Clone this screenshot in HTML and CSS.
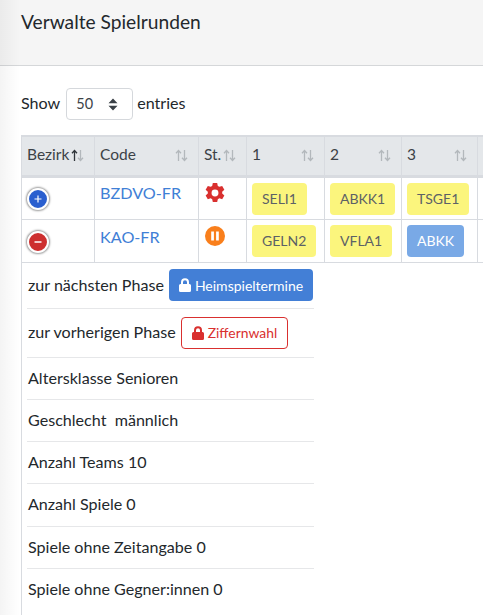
FILE: index.html
```html
<!DOCTYPE html>
<html lang="de">
<head>
<meta charset="utf-8">
<title>Verwalte Spielrunden</title>
<link rel="stylesheet" href="styles.css">
</head>
<body>
<div class="shade"></div>
<header class="head"><h1>Verwalte Spielrunden</h1></header>
<main class="content">
  <div class="length">
    <span class="label">Show</span>
    <span class="select"><span class="value">50</span>
      <svg class="updown" viewBox="0 0 10 13" width="10" height="13"><path d="M5 0.5 9.5 5.2H.5zM5 12.5.5 7.8h9z" fill="#3a4046"/></svg>
    </span>
    <span class="label">entries</span>
  </div>
  <div class="tablewrap">
    <svg class="defs" width="0" height="0"><defs><g id="s"><path d="M3.500 12V2M1 4.200 3.500 1.500 6 4.200M9.500 1v10M7 8.800l2.500 2.700L12 8.800" stroke="#b3b8bc" stroke-width="1.300" fill="none"/></g></defs></svg>
    <table class="grid">
      <colgroup><col class="c1"><col class="c2"><col class="c3"><col class="c4"><col class="c5"><col class="c6"><col class="c7"></colgroup>
      <thead>
        <tr>
          <th><span class="th">Bezirk<svg class="sort" viewBox="0 0 13 13" width="13" height="13"><path d="M3.500 12V2M1 4.200 3.500 1.500 6 4.200" stroke="#2f353a" stroke-width="1.300"/><path d="M9.500 1v10M7 8.800l2.500 2.700L12 8.800" stroke="#b3b8bc" stroke-width="1.300"/></svg></span></th>
          <th><span class="th">Code<svg class="sort" viewBox="0 0 13 13" width="13" height="13"><use href="#s"/></svg></span></th>
          <th><span class="th">St.<svg class="sort" viewBox="0 0 13 13" width="13" height="13"><use href="#s"/></svg></span></th>
          <th><span class="th">1<svg class="sort" viewBox="0 0 13 13" width="13" height="13"><use href="#s"/></svg></span></th>
          <th><span class="th">2<svg class="sort" viewBox="0 0 13 13" width="13" height="13"><use href="#s"/></svg></span></th>
          <th><span class="th">3<svg class="sort" viewBox="0 0 13 13" width="13" height="13"><use href="#s"/></svg></span></th>
          <th></th>
        </tr>
      </thead>
      <tbody>
        <tr>
          <td><span class="toggle plus"><svg viewBox="0 0 10 10" width="10" height="10"><path d="M5 1.500v7M1.500 5h7" stroke="#fff" stroke-width="1.200"/></svg></span></td>
          <td><a class="code top">BZDVO-FR</a></td>
          <td><svg class="st" viewBox="1 1 22 22" width="20" height="20"><path fill="#d9302f" fill-rule="evenodd" d="M9.600 1h4.800l.7 3.200 1.700 1 3.100-1 2.400 4.100-2.400 2.200v2l2.400 2.200-2.400 4.100-3.100-1-1.700 1-.7 3.200H9.600l-.7-3.200-1.700-1-3.100 1-2.400-4.100 2.400-2.200v-2L1.700 8.300l2.400-4.100 3.100 1 1.700-1zM12 8.200a3.800 3.800 0 1 0 0 7.600 3.800 3.800 0 0 0 0-7.600z"/></svg></td>
          <td><span class="tag">SELI1</span></td>
          <td><span class="tag">ABKK1</span></td>
          <td><span class="tag">TSGE1</span></td>
          <td></td>
        </tr>
        <tr>
          <td><span class="toggle minus"><svg viewBox="0 0 10 10" width="10" height="10"><path d="M1.500 5h7" stroke="#fff" stroke-width="1.500"/></svg></span></td>
          <td><a class="code">KAO-FR</a></td>
          <td><svg class="st pause" viewBox="0 0 20 20" width="20" height="20"><circle cx="10" cy="10" r="10" fill="#f97f1c"/><path d="M6.200 5.500h2.700v9H6.200zM11.100 5.500h2.700v9h-2.700z" fill="#fff"/></svg></td>
          <td><span class="tag">GELN2</span></td>
          <td><span class="tag">VFLA1</span></td>
          <td><span class="tag blue">ABKK</span></td>
          <td></td>
        </tr>
      </tbody>
    </table>
    <ul class="details">
      <li class="phase first"><span class="txt">zur nächsten Phase</span><a class="btn solid"><svg viewBox="0 0 12 14" width="12" height="14"><path fill="currentColor" d="M2 6V4.200a4 4 0 0 1 8 0V6h.5A1.500 1.500 0 0 1 12 7.500v5a1.500 1.500 0 0 1-1.500 1.500h-9A1.500 1.500 0 0 1 0 12.500v-5A1.500 1.500 0 0 1 1.500 6zm2 0h4V4.200a2 2 0 0 0-4 0z"/></svg>Heimspieltermine</a></li>
      <li class="phase"><span class="txt">zur vorherigen Phase</span><a class="btn outline"><svg viewBox="0 0 12 14" width="12" height="14"><path fill="currentColor" d="M2 6V4.200a4 4 0 0 1 8 0V6h.5A1.500 1.500 0 0 1 12 7.500v5a1.500 1.500 0 0 1-1.500 1.500h-9A1.500 1.500 0 0 1 0 12.500v-5A1.500 1.500 0 0 1 1.500 6zm2 0h4V4.200a2 2 0 0 0-4 0z"/></svg>Ziffernwahl</a></li>
      <li><span class="txt">Altersklasse Senioren</span></li>
      <li><span class="txt">Geschlecht&nbsp; männlich</span></li>
      <li><span class="txt">Anzahl Teams 10</span></li>
      <li><span class="txt">Anzahl Spiele 0</span></li>
      <li><span class="txt">Spiele ohne Zeitangabe 0</span></li>
      <li class="last"><span class="txt">Spiele ohne Gegner:innen 0</span></li>
    </ul>
  </div>
</main>
</body>
</html>
```
FILE: styles.css
```css
html, body { margin: 0; padding: 0; height: 615px; overflow: hidden; background: #fff; }
body { font-family: "Lato", "Noto Sans", sans-serif; font-size: 16.100px; color: #23282c; position: relative; }
.shade { position: absolute; left: 0; top: 0; width: 20px; height: 615px; background: linear-gradient(90deg, rgba(0,0,0,.045), rgba(0,0,0,0)); pointer-events: none; }
.head { height: 65px; background: #f5f5f5; border-bottom: 1px solid #d5d7d9; padding-left: 21px; }
.head h1 { margin: 0; padding-top: 10px; font-size: 19.200px; line-height: 24px; font-weight: 400; }
.content { padding: 22px 0 0 21px; }
.length { display: flex; align-items: center; gap: 5px; height: 32px; }
.label { padding-bottom: 3px; }
.select { box-sizing: border-box; width: 67px; height: 32px; margin: 0 -1px 0 1px; border: 1px solid #d5d8dc; border-radius: 4px; padding: 0 14px 0 9px; display: flex; align-items: center; justify-content: space-between; font-size: 14.500px; color: #3d4348; }
.value { padding-bottom: 1px; }
.tablewrap { margin-top: 15px; width: 462px; height: 480px; border-left: 1px solid #d8dbe0; overflow: hidden; }
.grid { table-layout: fixed; border-collapse: collapse; width: 470px; margin-left: -1px; }
.c1 { width: 73px; } .c2 { width: 104px; } .c3 { width: 48px; } .c4 { width: 78px; } .c5 { width: 77px; } .c6 { width: 76px; } .c7 { width: 14px; }
.grid th { height: 40px; padding: 0 10px 3px 5px; background: #e4e7ea; border: 1px solid #d8dbe0; border-bottom: 3px solid #d8dbe0; border-top: 2px solid #d8dbe0; text-align: left; font-weight: 400; font-size: 15.500px; color: #3c4247; box-sizing: border-box; }
.th { display: flex; align-items: center; justify-content: space-between; }
.sort { flex: none; fill: none; margin-top: 2px; }
.grid td { height: 43px; padding: 5px 5px 0; border: 1px solid #d8dbe0; box-sizing: border-box; vertical-align: top; }
.defs { display: block; position: absolute; }
.toggle { display: flex; width: 18px; height: 18px; margin-top: 6px; border-radius: 50%; align-items: center; justify-content: center; border: 2px solid #fff; box-shadow: 0 0 2px 1px rgba(0,0,0,.4); }
.plus { background: #2a5fcf; margin-top: 5px; }
.minus { background: #cd2f2f; }
.code { color: #3f80d6; font-size: 16.200px; display: block; line-height: 23px; }
.code.top { line-height: 20px; }
.st { display: block; margin-left: 1px; }
.pause { margin-top: 1px; }
.tag { display: inline-block; box-sizing: border-box; height: 32px; line-height: 31px; padding: 0 10px; background: #fbf57d; border-radius: 4px; font-size: 14px; color: #5c6166; }
.tag.blue { background: #79a9e6; color: #fff; }
.details { list-style: none; margin: 0; padding: 0 0 0 5px; width: 287px; }
.details li { border-bottom: 1px solid #e6e7e9; height: 42.250px; display: flex; align-items: center; gap: 5px; white-space: pre; box-sizing: border-box; }
.txt { padding-bottom: 2px; padding-left: 1px; }
.details .phase { height: 49px; }
.details .first { height: 46px; }
.details .last { border-bottom: 0; }
.btn { display: inline-flex; align-items: center; gap: 4px; box-sizing: border-box; height: 32px; padding: 0 10px; border-radius: 4px; font-size: 14px; }
.solid { background: #437fd6; color: #fff; }
.outline { border: 1px solid #d9302f; color: #d9302f; font-size: 13.900px; }
```
